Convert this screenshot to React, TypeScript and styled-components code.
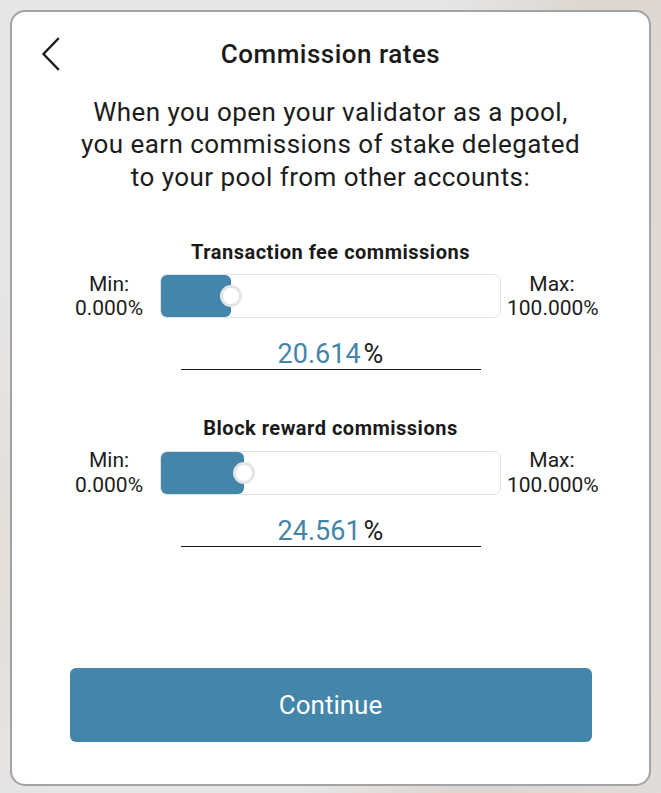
import React from "react";
import styled, { createGlobalStyle } from "styled-components";

const Global = createGlobalStyle`
  html, body { margin: 0; padding: 0; }
  body {
    width: 661px;
    height: 793px;
    overflow: hidden;
    font-family: Roboto, "Noto Sans", Arial, sans-serif;
    background:
      radial-gradient(ellipse 120px 300px at -20px 560px, #e4dcd6 0%, rgba(228,220,214,0) 100%),
      linear-gradient(100deg, #e6e6e6 0%, #e6e6e6 55%, #ddd5cf 75%, #e2dcd8 100%);
  }
`;

const Page = styled.div`
  padding: 10px;
  box-sizing: border-box;
  width: 661px;
  height: 793px;
`;

const Card = styled.div`
  box-sizing: border-box;
  width: 641px;
  height: 776px;
  background: #ffffff;
  border: 2px solid #a3a3a3;
  border-radius: 15px;
  padding: 0 58px 42px;
  display: flex;
  flex-direction: column;
  align-items: center;
  color: #1c1c1c;
`;

const Header = styled.div`
  position: relative;
  width: 100%;
  margin-top: 25px;
  height: 34px;
  display: flex;
  justify-content: center;
  align-items: center;
`;

const BackButton = styled.button`
  position: absolute;
  left: -33px;
  top: 0;
  width: 28px;
  height: 34px;
  padding: 0;
  border: 0;
  background: none;
  display: flex;
  align-items: center;
  justify-content: center;
  cursor: pointer;
`;

const Title = styled.h1`
  margin: 0;
  font-size: 26px;
  letter-spacing: 0.5px;
  font-weight: 500;
  line-height: 34px;
  color: #1a1a1a;
`;

const Intro = styled.p`
  margin: 24.5px 0 0;
  font-size: 26px;
  letter-spacing: 0.45px;
  line-height: 32.7px;
  text-align: center;
  font-weight: 400;
  color: #1c1c1c;
`;

const Section = styled.section`
  width: 100%;
  margin-top: 45px;
  display: flex;
  flex-direction: column;
  align-items: center;
`;

const SectionTitle = styled.h2`
  margin: 0;
  font-size: 20px;
  letter-spacing: 0.5px;
  line-height: 26px;
  font-weight: 700;
  color: #1a1a1a;
`;

const SliderRow = styled.div`
  margin-top: 7px;
  display: flex;
  align-items: center;
  gap: 6px;
`;

const Limit = styled.div`
  width: 90px;
  font-size: 21px;
  line-height: 24.4px;
  text-align: center;
  color: #1c1c1c;
  white-space: nowrap;
`;

const Track = styled.div`
  position: relative;
  box-sizing: border-box;
  width: 341px;
  height: 44px;
  border: 1px solid #e2e2e2;
  border-radius: 7px;
  background: #fff;
`;

const Fill = styled.div`
  height: 100%;
  background: #4485aa;
  border-radius: 6px;
`;

const Thumb = styled.div`
  position: absolute;
  top: 50%;
  width: 22px;
  height: 22px;
  box-sizing: border-box;
  border-radius: 50%;
  background: #fff;
  border: 3px solid #e4e4e4;
  transform: translate(-50%, -50%);
`;

const ValueBox = styled.div`
  margin-top: 19px;
  width: 300px;
  height: 30px;
  border-bottom: 1px solid #1a1a1a;
  display: flex;
  justify-content: center;
  align-items: center;
  font-size: 27px;
  line-height: 30px;
`;

const Value = styled.span`
  color: #4485aa;
`;

const Unit = styled.span`
  color: #1c1c1c;
  margin-left: 3px;
`;

const Continue = styled.button`
  margin-top: auto;
  width: 522px;
  height: 74px;
  border: 0;
  border-radius: 6px;
  background: #4485aa;
  color: #fff;
  font-family: Roboto, "Noto Sans", Arial, sans-serif;
  font-size: 26px;
  font-weight: 400;
  cursor: pointer;
`;

const Chevron = () => (
  <svg width="20" height="34" viewBox="0 0 20 34" fill="none">
    <path d="M17 2 L2.5 17 L17 32" stroke="#1a1a1a" strokeWidth="2.3" strokeLinecap="square" strokeLinejoin="miter" />
  </svg>
);

type Rate = { title: string; value: number };

const rates: Rate[] = [
  { title: "Transaction fee commissions", value: 20.614 },
  { title: "Block reward commissions", value: 24.561 },
];

export default function App() {
  return (
    <>
      <Global />
      <Page>
        <Card>
          <Header>
            <BackButton aria-label="Back">
              <Chevron />
            </BackButton>
            <Title>Commission rates</Title>
          </Header>
          <Intro>
            When you open your validator as a pool,
            <br />
            you earn commissions of stake delegated
            <br />
            to your pool from other accounts:
          </Intro>
          {rates.map((r) => (
            <Section key={r.title}>
              <SectionTitle>{r.title}</SectionTitle>
              <SliderRow>
                <Limit>
                  Min:
                  <br />
                  0.000%
                </Limit>
                <Track>
                  <Fill style={{ width: `${r.value}%` }} />
                  <Thumb style={{ left: `${r.value}%` }} />
                </Track>
                <Limit>
                  Max:
                  <br />
                  100.000%
                </Limit>
              </SliderRow>
              <ValueBox>
                <Value>{r.value.toFixed(3)}</Value>
                <Unit>%</Unit>
              </ValueBox>
            </Section>
          ))}
          <Continue>Continue</Continue>
        </Card>
      </Page>
    </>
  );
}
